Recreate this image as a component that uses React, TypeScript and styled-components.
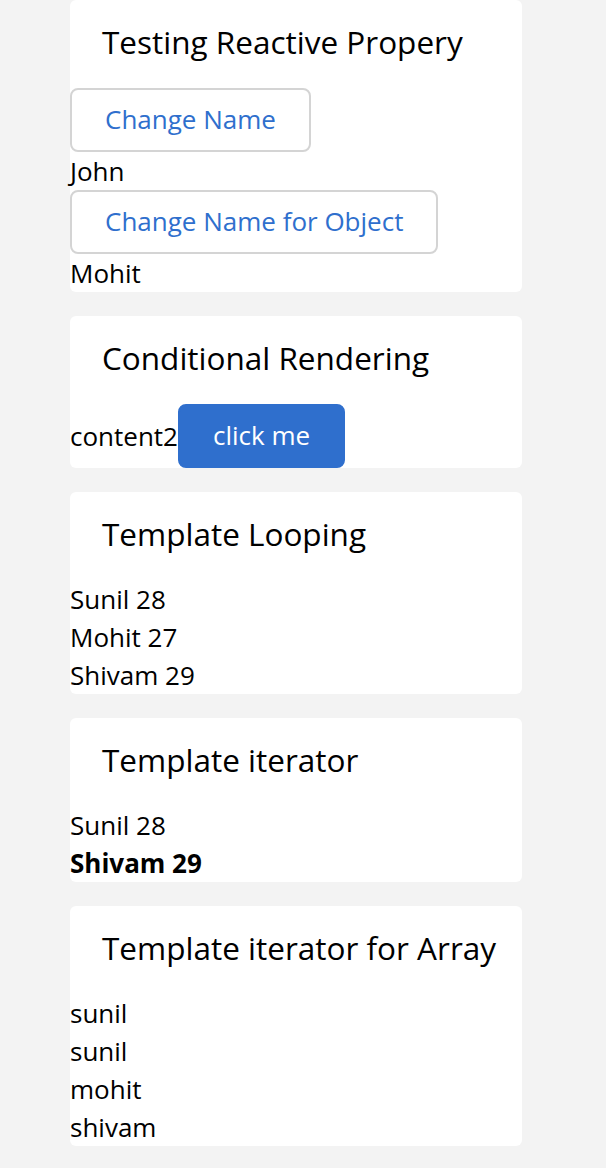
import React from "react";
import styled, { createGlobalStyle } from "styled-components";

const Global = createGlobalStyle`
  html, body { margin: 0; padding: 0; background: #f3f3f3; }
  body { font-family: "Open Sans", "Noto Sans", sans-serif; color: #000; }
`;

const Page = styled.div`
  display: flex;
  flex-direction: column;
  gap: 24px;
  padding: 0 84px 22px 70px;
`;

const Card = styled.section`
  background: #fff;
  border-radius: 6px;
  display: flex;
  flex-direction: column;
`;

const Header = styled.h2`
  margin: 0;
  height: 88px;
  box-sizing: border-box;
  padding: 0 0 6px 32px;
  display: flex;
  align-items: center;
  font-size: 31.5px;
  font-weight: 400;
`;

const Body = styled.div`
  display: flex;
  flex-direction: column;
  align-items: flex-start;
  font-size: 26px;
  line-height: 38px;
`;

const Row = styled.div`
  display: flex;
  align-items: center;
`;

const Line = styled.div<{ $bold?: boolean }>`
  font-weight: ${(p) => (p.$bold ? 700 : 400)};
`;

const Button = styled.button<{ $brand?: boolean }>`
  font-family: inherit;
  font-size: 26px;
  height: 64px;
  padding: 0 33px 3px;
  border-radius: 8px;
  border: 2px solid ${(p) => (p.$brand ? "#2f6fcd" : "#d4d4d4")};
  background: ${(p) => (p.$brand ? "#2f6fcd" : "#fff")};
  color: ${(p) => (p.$brand ? "#fff" : "#2f6fcd")};
  cursor: pointer;
`;

export default function App() {
  return (
    <>
      <Global />
      <Page>
        <Card>
          <Header>Testing Reactive Propery</Header>
          <Body>
            <Button>Change Name</Button>
            <Line>John</Line>
            <Button>Change Name for Object</Button>
            <Line>Mohit</Line>
          </Body>
        </Card>
        <Card>
          <Header>Conditional Rendering</Header>
          <Body>
            <Row>
              <Line>content2</Line>
              <Button $brand>click me</Button>
            </Row>
          </Body>
        </Card>
        <Card>
          <Header>Template Looping</Header>
          <Body>
            <Line>Sunil 28</Line>
            <Line>Mohit 27</Line>
            <Line>Shivam 29</Line>
          </Body>
        </Card>
        <Card>
          <Header>Template iterator</Header>
          <Body>
            <Line>Sunil 28</Line>
            <Line $bold>Shivam 29</Line>
          </Body>
        </Card>
        <Card>
          <Header>Template iterator for Array</Header>
          <Body>
            <Line>sunil</Line>
            <Line>sunil</Line>
            <Line>mohit</Line>
            <Line>shivam</Line>
          </Body>
        </Card>
      </Page>
    </>
  );
}
